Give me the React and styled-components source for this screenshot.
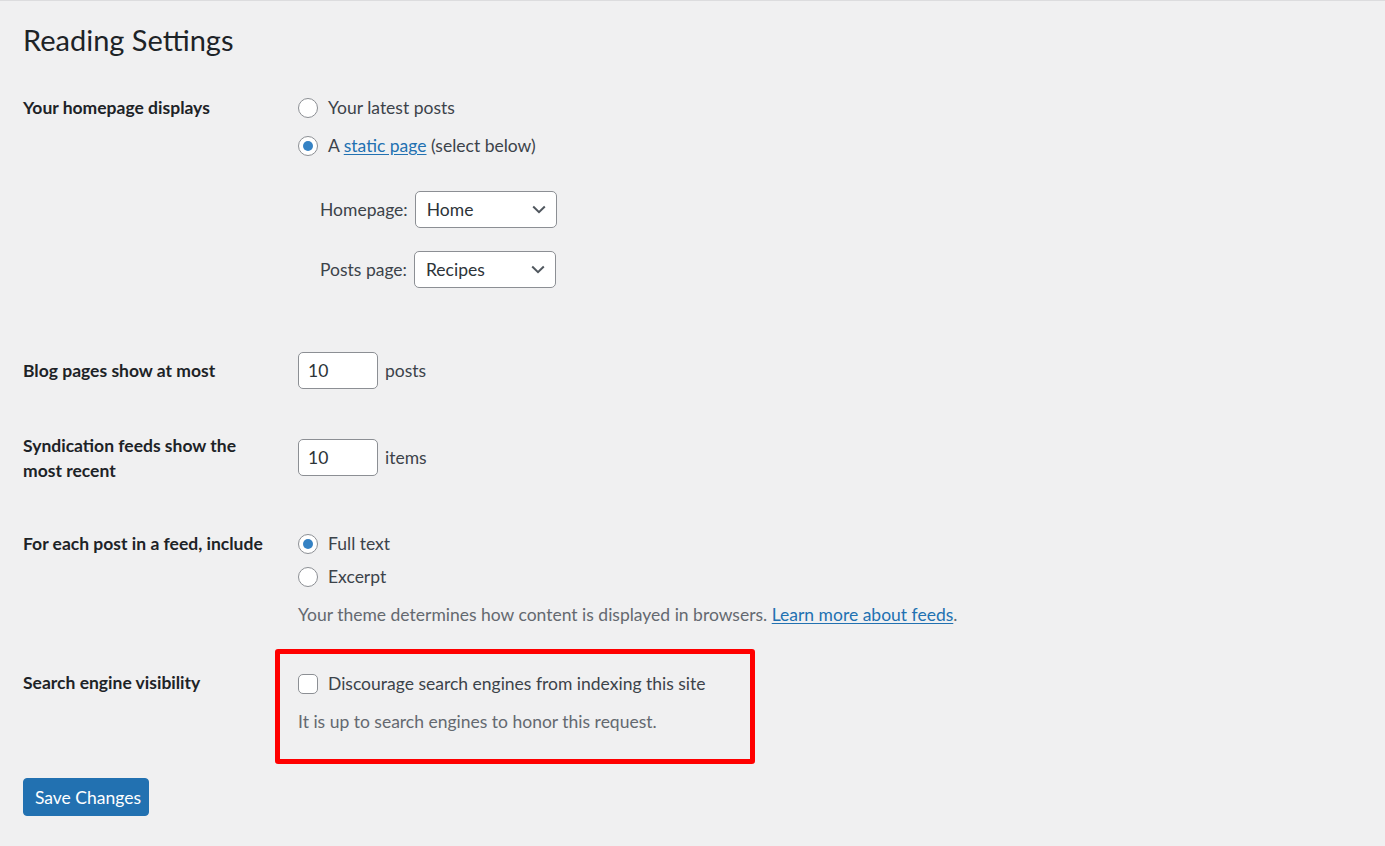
import styled, { createGlobalStyle } from 'styled-components'

const GlobalStyle = createGlobalStyle`
  html, body {
    margin: 0;
    background: #f0f0f1;
  }
  body {
    font-family: Lato, "Noto Sans", "Liberation Sans", sans-serif;
    font-size: 17.5px;
    color: #3c434a;
  }
  * { box-sizing: border-box; }
`

const Page = styled.div`
  min-height: 846px;
  border-top: 1px solid #dcdcde;
  padding: 20px 23px 0 23px;
`

const Title = styled.h1`
  margin: 0;
  font-size: 29px;
  font-weight: 400;
  line-height: 38px;
  color: #1d2327;
`

const Row = styled.div`
  display: grid;
  grid-template-columns: 262px 1fr;
  align-items: start;
`

const Label = styled.div`
  padding-top: ${p => p.$top}px;
  font-weight: 700;
  line-height: 25px;
  color: #1d2327;
  width: 250px;
`

const Field = styled.div`
  padding: ${p => p.$top}px 0 ${p => p.$bottom || 0}px 13px;
  display: flex;
  flex-direction: column;
  align-items: flex-start;
`

const Choice = styled.label`
  display: flex;
  align-items: center;
  gap: 10px;
  height: 24px;
  line-height: 24px;
  margin-top: ${p => p.$gap || 0}px;
`

const Radio = styled.span`
  width: 20px;
  height: 20px;
  border-radius: 50%;
  border: 1px solid #8c8f94;
  background: #fff;
  display: flex;
  align-items: center;
  justify-content: center;
  flex-shrink: 0;

  &::after {
    content: '';
    width: 10px;
    height: 10px;
    border-radius: 50%;
    background: ${p => (p.$checked ? '#3582c4' : 'transparent')};
  }
`

const Checkbox = styled.span`
  width: 20px;
  height: 20px;
  border-radius: 5px;
  border: 1px solid #8c8f94;
  background: #fff;
  flex-shrink: 0;
`

const Link = styled.a`
  color: #2271b1;
  text-decoration: underline;
  text-underline-offset: 2px;
`

const PageSelect = styled.div`
  display: flex;
  align-items: center;
  gap: 7px;
  margin-left: 22px;
  margin-top: ${p => p.$gap}px;
`

const Dropdown = styled.button`
  width: 142px;
  height: 37px;
  display: flex;
  align-items: center;
  justify-content: space-between;
  padding: 0 10px 0 11px;
  border: 1px solid #8c8f94;
  border-radius: 5px;
  background: #fff;
  font: inherit;
  color: #2c3338;
  cursor: pointer;
`

const Inline = styled.div`
  display: flex;
  align-items: center;
  gap: 7px;
`

const NumberInput = styled.input`
  width: 80px;
  height: 37px;
  padding: 0 9px;
  border: 1px solid #8c8f94;
  border-radius: 5px;
  background: #fff;
  font: inherit;
  color: #2c3338;
`

const Description = styled.p`
  margin: ${p => p.$gap}px 0 0 0;
  line-height: 24px;
  color: #646970;
`

const Highlight = styled.div`
  width: 480px;
  margin-left: -23px;
  padding: 18px 18px 25px 18px;
  border: 5px solid #ff0000;
  border-radius: 3px;
`

const Submit = styled.button`
  margin-top: 14px;
  width: 126px;
  height: 38px;
  padding: 0 6px 0 10px;
  border: 1px solid #2271b1;
  border-radius: 4px;
  background: #2271b1;
  color: #fff;
  font: inherit;
  text-align: center;
  cursor: pointer;
`

const Chevron = () => (
  <svg width="14" height="9" viewBox="0 0 14 9" fill="none">
    <path d="M1.2 1.5 7 7.2l5.8-5.7" stroke="#50575e" strokeWidth="2" />
  </svg>
)

const App = () => (
  <Page>
    <GlobalStyle />
    <Title>Reading Settings</Title>

    <Row>
      <Label $top={36}>Your homepage displays</Label>
      <Field $top={37} $bottom={43}>
        <Choice>
          <Radio />
          Your latest posts
        </Choice>
        <Choice $gap={14}>
          <Radio $checked />
          <span>
            A <Link href="#">static page</Link> (select below)
          </span>
        </Choice>
        <PageSelect $gap={33}>
          Homepage:
          <Dropdown type="button">
            Home
            <Chevron />
          </Dropdown>
        </PageSelect>
        <PageSelect $gap={23}>
          Posts page:
          <Dropdown type="button">
            Recipes
            <Chevron />
          </Dropdown>
        </PageSelect>
      </Field>
    </Row>

    <Row>
      <Label $top={27}>Blog pages show at most</Label>
      <Field $top={21} $bottom={30}>
        <Inline>
          <NumberInput type="number" defaultValue="10" />
          posts
        </Inline>
      </Field>
    </Row>

    <Row>
      <Label $top={14}>Syndication feeds show the most recent</Label>
      <Field $top={20} $bottom={25}>
        <Inline>
          <NumberInput type="number" defaultValue="10" />
          items
        </Inline>
      </Field>
    </Row>

    <Row>
      <Label $top={30}>For each post in a feed, include</Label>
      <Field $top={31} $bottom={13}>
        <Choice>
          <Radio $checked />
          Full text
        </Choice>
        <Choice $gap={9}>
          <Radio />
          Excerpt
        </Choice>
        <Description $gap={14}>
          Your theme determines how content is displayed in browsers.{' '}
          <Link href="#">Learn more about feeds</Link>.
        </Description>
      </Field>
    </Row>

    <Row>
      <Label $top={30}>Search engine visibility</Label>
      <Field $top={9}>
        <Highlight>
          <Choice>
            <Checkbox />
            Discourage search engines from indexing this site
          </Choice>
          <Description $gap={14}>It is up to search engines to honor this request.</Description>
        </Highlight>
      </Field>
    </Row>

    <Submit type="button">Save Changes</Submit>
  </Page>
)

export default App
